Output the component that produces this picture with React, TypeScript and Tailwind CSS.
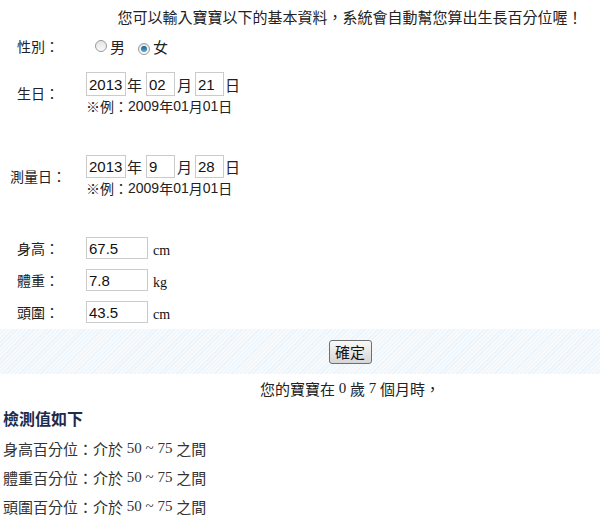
import React from "react";

const cjk = "font-['Noto_Sans_CJK_TC','Liberation_Sans',sans-serif]";

function Radio({ checked }: { checked?: boolean }) {
  return (
    <span className="inline-flex h-[12px] w-[12px] items-center justify-center rounded-full border border-[#9a9a9a] bg-linear-to-b from-[#e4e4e4] to-[#fafafa]">
      {checked && (
        <span className="h-[6px] w-[6px] rounded-full bg-linear-to-b from-[#1d5f86] to-[#5aa9d4]" />
      )}
    </span>
  );
}

function Box({ value, w, h = "h-[24px]" }: { value: string; w: string; h?: string }) {
  return (
    <input
      readOnly
      value={value}
      className={`${w} ${h} border border-[#cbcbcb] bg-white px-[2px] font-['Liberation_Sans',Arial,sans-serif] text-[15px] leading-none text-[#111] outline-none`}
    />
  );
}

function Label({ text }: { text: string }) {
  return (
    <div className="w-[86px] shrink-0">
      <div className="w-[76px] text-center text-[14px] text-[#222]">{text}</div>
    </div>
  );
}

function DateBlock({ y, m, d, h }: { y: string; m: string; d: string; h: string }) {
  return (
    <div className="flex flex-col">
      <div className={`flex items-center ${h} text-[15px] text-[#222]`}>
        <Box value={y} w="w-[40px]" h={h} />
        <span className="ml-[1px]">年</span>
        <span className="ml-[4px]"><Box value={m} w="w-[29px]" h={h} /></span>
        <span className="ml-[2px]">月</span>
        <span className="ml-[3px]"><Box value={d} w="w-[29px]" h={h} /></span>
        <span className="ml-[1px]">日</span>
      </div>
      <div className="mt-[1px] flex h-[17px] items-center text-[14px] leading-none text-[#222]">
        ※例：<span className="font-['Liberation_Sans',sans-serif] text-[14px]">2009</span>年
        <span className="font-['Liberation_Sans',sans-serif] text-[14px]">01</span>月
        <span className="font-['Liberation_Sans',sans-serif] text-[14px]">01</span>日
      </div>
    </div>
  );
}

function Measure({ label, value, unit }: { label: string; value: string; unit: string }) {
  return (
    <div className="flex h-[22px] items-center">
      <Label text={label} />
      <Box value={value} w="w-[62px]" h="h-[22px]" />
      <span className="ml-[5px] mt-[5px] font-['Liberation_Serif',serif] text-[14px] text-[#111]">{unit}</span>
    </div>
  );
}

function ResultLine({ label }: { label: string }) {
  return (
    <div className="flex h-[29px] items-center pl-[3px] text-[15px] text-[#333]">
      {label}百分位：介於<span className="font-['Liberation_Serif',serif] text-[15px]">&nbsp;50 ~ 75&nbsp;</span>之間
    </div>
  );
}

export default function App() {
  return (
    <div className={`h-[524px] w-[600px] overflow-hidden bg-white ${cjk} leading-none`}>
      <div className="flex h-[32px] items-center justify-center pl-[100px] text-[15px] text-[#222]">
        您可以輸入寶寶以下的基本資料，系統會自動幫您算出生長百分位喔！
      </div>

      <div className="flex h-[28px] items-center">
        <Label text="性別：" />
        <div className="ml-[9px] flex items-center text-[15px] text-[#222]">
          <Radio />
          <span className="ml-[3px]">男</span>
          <span className="ml-[13px]"><Radio checked /></span>
          <span className="ml-[3px]">女</span>
        </div>
      </div>

      <div className="mt-[12px] flex items-center">
        <Label text="生日：" />
        <DateBlock y="2013" m="02" d="21" h="h-[24px]" />
      </div>

      <div className="mt-[41px] flex items-center">
        <Label text="測量日：" />
        <DateBlock y="2013" m="9" d="28" h="h-[23px]" />
      </div>

      <div className="mt-[41px] flex flex-col gap-[10px]">
        <Measure label="身高：" value="67.5" unit="cm" />
        <Measure label="體重：" value="7.8" unit="kg" />
        <Measure label="頭圍：" value="43.5" unit="cm" />
      </div>

      <div className="mt-[6px] flex h-[45px] items-center justify-center bg-[repeating-linear-gradient(135deg,#ebf4fa_0px,#ebf4fa_1px,#f6fafd_1px,#f6fafd_3px)] pl-[100px]">
        <button className="h-[24px] w-[43px] rounded-[3px] border border-[#6f6f6f] bg-linear-to-b from-[#f8f8f8] to-[#d6d6d6] text-[15px] text-[#111]">
          確定
        </button>
      </div>

      <div className="flex h-[28px] items-center justify-center pl-[100px] text-[15px] text-[#222]">
        您的寶寶在<span className="font-['Liberation_Serif',serif]">&nbsp;0&nbsp;</span>歲<span className="font-['Liberation_Serif',serif]">&nbsp;7&nbsp;</span>個月時，
      </div>

      <div className="flex h-[32px] items-center pl-[3px] text-[16px] font-bold text-[#1c2b4f]">
        檢測值如下
      </div>

      <ResultLine label="身高" />
      <ResultLine label="體重" />
      <ResultLine label="頭圍" />
    </div>
  );
}
